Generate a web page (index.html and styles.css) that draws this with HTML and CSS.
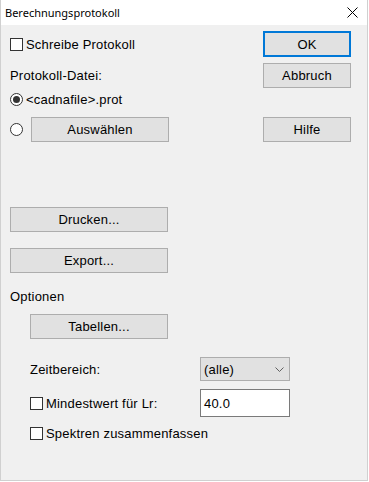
FILE: index.html
```html
<!DOCTYPE html>
<html>
<head>
<meta charset="utf-8">
<link rel="stylesheet" href="styles.css">
</head>
<body>
<div class="window">
  <div class="titlebar">
    <span class="title">Berechnungsprotokoll</span>
    <svg class="close" width="11" height="11" viewBox="0 0 11 11"><path d="M0.5 0.5L10.5 10.5M10.5 0.5L0.5 10.5" stroke="#000" stroke-width="1" fill="none"/></svg>
  </div>
  <div class="content">
    <div class="row row-a">
      <label class="check left"><span class="box"></span><span>Schreibe Protokoll</span></label>
      <button class="btn btn-right btn-default">OK</button>
    </div>
    <div class="row row-b">
      <span class="left">Protokoll-Datei:</span>
      <button class="btn btn-right">Abbruch</button>
    </div>
    <div class="row row-c">
      <label class="check"><span class="radio checked"></span><span>&lt;cadnafile&gt;.prot</span></label>
    </div>
    <div class="row row-d">
      <div class="left radio-row"><span class="radio"></span><button class="btn btn-wide btn-select">Auswählen</button></div>
      <button class="btn btn-right">Hilfe</button>
    </div>
    <div class="row row-e"><button class="btn btn-wide btn-main">Drucken...</button></div>
    <div class="row row-f"><button class="btn btn-wide btn-main">Export...</button></div>
    <div class="row row-g"><span>Optionen</span></div>
    <div class="indent">
      <div class="row row-h"><button class="btn btn-wide">Tabellen...</button></div>
      <div class="row row-i">
        <span class="field-label">Zeitbereich:</span>
        <div class="select"><span>(alle)</span><svg width="9" height="5" viewBox="0 0 9 5"><path d="M0.5 0.5L4.5 4.5L8.5 0.5" stroke="#606060" fill="none"/></svg></div>
      </div>
      <div class="row row-j">
        <label class="check field-label"><span class="box"></span><span>Mindestwert für Lr:</span></label>
        <div class="input">40.0</div>
      </div>
      <div class="row row-k">
        <label class="check"><span class="box"></span><span>Spektren zusammenfassen</span></label>
      </div>
    </div>
  </div>
</div>
</body>
</html>
```

FILE: styles.css
```css
* { box-sizing: border-box; }
body {
  margin: 0;
  background: #ffffff;
}
.window {
  width: 368px;
  height: 481px;
  background: #f0f0f0;
  border: 1px solid #d0d0d0;
  border-top: none;
  font-family: "Liberation Sans", Arial, sans-serif;
  font-size: 13px;
  letter-spacing: 0.2px;
  color: #000;
}
.titlebar {
  height: 25px;
  background: #ffffff;
  display: flex;
  align-items: center;
  justify-content: space-between;
  padding: 0 9px 0 4px;
}
.title {
  font-family: "Noto Sans", sans-serif;
  font-size: 11px;
  letter-spacing: 0;
  margin-top: -1px;
}
.close {
  margin-top: -1px;
}
.content {
  padding: 6px 0 0 9px;
}
.row {
  display: flex;
  align-items: center;
}
.left {
  width: 253px;
}
.btn {
  font: inherit;
  letter-spacing: inherit;
  color: #000;
  background: #e1e1e1;
  border: 1px solid #adadad;
  height: 25px;
  padding: 0;
  margin: 0;
}
.btn-right {
  width: 88px;
}
.btn-default {
  border: 2px solid #0078d7;
  height: 26px;
}
.btn-wide {
  width: 138px;
}
.btn-main {
  width: 158px;
}
.check {
  display: flex;
  align-items: center;
}
.box {
  width: 13px;
  height: 13px;
  border: 1px solid #333;
  background: #fff;
  margin-right: 3px;
}
.radio {
  width: 13px;
  height: 13px;
  border: 1px solid #333;
  border-radius: 50%;
  background: #fff;
  margin-right: 3px;
  display: flex;
  align-items: center;
  justify-content: center;
}
.radio.checked::after {
  content: "";
  width: 7px;
  height: 7px;
  border-radius: 50%;
  background: #333;
}
.row-a { height: 26px; }
.row-b { height: 25px; margin-top: 6px; }
.row-c { height: 13px; margin-top: 5px; }
.row-d { height: 25px; margin-top: 11px; }
.radio-row {
  display: flex;
  align-items: center;
}
.radio-row .radio { margin-right: 8px; }
.row-e { height: 25px; margin-top: 65px; }
.row-f { height: 25px; margin-top: 16px; }
.row-g { height: 15px; margin-top: 16px; }
.indent { padding-left: 20px; }
.row-h { height: 25px; margin-top: 10px; }
.row-i { height: 24px; margin-top: 18px; }
.field-label { width: 170px; }
.select {
  width: 90px;
  height: 24px;
  background: #e1e1e1;
  border: 1px solid #adadad;
  display: flex;
  align-items: center;
  justify-content: space-between;
  padding: 0 5px 0 3px;
}
.row-j { height: 28px; margin-top: 8px; }
.input {
  width: 90px;
  height: 28px;
  background: #fff;
  border: 1px solid #7a7a7a;
  display: flex;
  align-items: center;
  padding-left: 3px;
}
.row-k { height: 13px; margin-top: 10px; }
```
